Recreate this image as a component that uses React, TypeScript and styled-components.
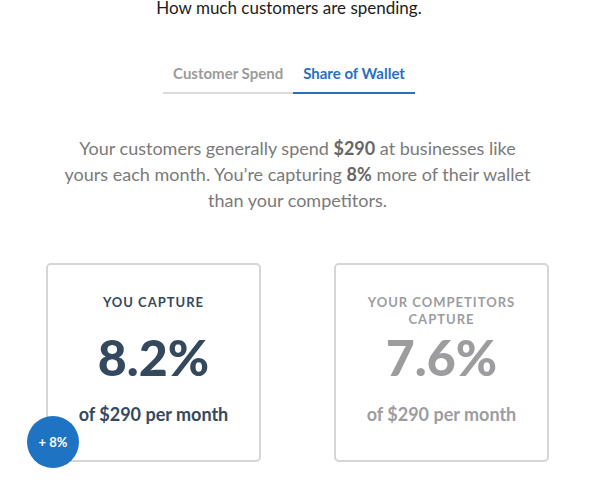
import React from "react";
import styled, { createGlobalStyle } from "styled-components";

const GlobalStyle = createGlobalStyle`
  html, body { margin: 0; padding: 0; background: #ffffff; }
  body { font-family: Lato, "Open Sans", "Liberation Sans", sans-serif; -webkit-font-smoothing: antialiased; }
  * { box-sizing: border-box; }
`;

const Page = styled.div`
  width: 595px;
  height: 482px;
  overflow: hidden;
  display: flex;
  flex-direction: column;
  align-items: center;
`;

const Header = styled.div`
  align-self: stretch;
  display: flex;
  flex-direction: column;
  align-items: center;
  padding-right: 17px;
`;

const Title = styled.h2`
  margin: -2px 0 0;
  font-size: 17px;
  line-height: 20px;
  font-weight: 400;
  color: #1c1c1c;
`;

const Tabs = styled.div`
  display: flex;
  margin-top: 47px;
`;

const Tab = styled.div<{ $active?: boolean }>`
  padding: 0 10px 10px;
  font-size: 15px;
  line-height: 17px;
  font-weight: 700;
  color: ${(p) => (p.$active ? "#2a6fbf" : "#9b9b9b")};
  border-bottom: 2px solid ${(p) => (p.$active ? "#2472c1" : "#dcdcdc")};
`;

const Summary = styled.p`
  margin: 41px 0 0;
  width: 470px;
  text-align: center;
  font-size: 18px;
  line-height: 26px;
  color: #7a7a7a;

  strong {
    font-weight: 700;
    color: #666666;
  }
`;

const Cards = styled.div`
  margin-top: 50px;
  width: 503px;
  display: flex;
  justify-content: space-between;
`;

const Card = styled.div<{ $muted?: boolean }>`
  position: relative;
  width: 215px;
  height: 199px;
  border: 2px solid #d6d6d6;
  border-radius: 5px;
  padding-top: 29px;
  display: flex;
  flex-direction: column;
  align-items: center;
  text-align: center;
  color: ${(p) => (p.$muted ? "#9d9d9f" : "#34495e")};
`;

const Label = styled.div`
  height: 34px;
  width: 170px;
  font-size: 13px;
  line-height: 17px;
  font-weight: 700;
  letter-spacing: 1px;
  text-transform: uppercase;
`;

const Value = styled.div`
  margin-top: 4px;
  font-size: 50px;
  line-height: 50px;
  font-weight: 900;
`;

const Sub = styled.div`
  margin-top: 21px;
  font-size: 18px;
  line-height: 22px;
  font-weight: 700;
`;

const Badge = styled.div`
  position: absolute;
  left: -21px;
  top: 151px;
  width: 52px;
  height: 52px;
  border-radius: 50%;
  background: #1f73c3;
  color: #ffffff;
  display: flex;
  align-items: center;
  justify-content: center;
  font-size: 13px;
  font-weight: 700;
`;

export default function App() {
  return (
    <>
      <GlobalStyle />
      <Page>
        <Header>
          <Title>How much customers are spending.</Title>
          <Tabs>
            <Tab>Customer Spend</Tab>
            <Tab $active>Share of Wallet</Tab>
          </Tabs>
        </Header>
        <Summary>
          Your customers generally spend <strong>$290</strong> at businesses like
          yours each month. You’re capturing <strong>8%</strong> more of their wallet
          than your competitors.
        </Summary>
        <Cards>
          <Card>
            <Label>You capture</Label>
            <Value>8.2%</Value>
            <Sub>of $290 per month</Sub>
            <Badge>+ 8%</Badge>
          </Card>
          <Card $muted>
            <Label>Your competitors capture</Label>
            <Value>7.6%</Value>
            <Sub>of $290 per month</Sub>
          </Card>
        </Cards>
      </Page>
    </>
  );
}
